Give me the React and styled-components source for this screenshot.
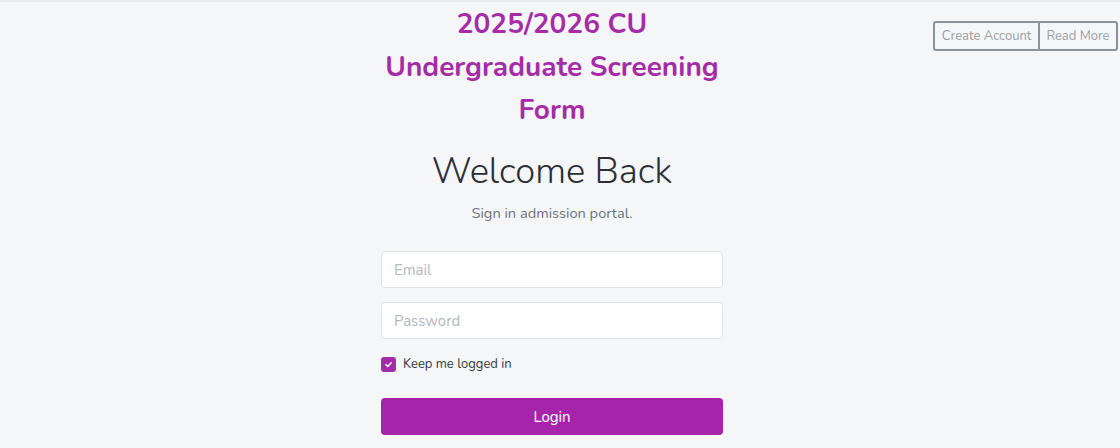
import React from 'react'
import styled, { createGlobalStyle } from 'styled-components'

const GlobalStyle = createGlobalStyle`
  html, body {
    margin: 0;
    padding: 0;
    background: #f5f6f8;
  }
  body {
    font-family: "Nunito", "Lato", "Noto Sans", sans-serif;
    color: #2b2f36;
  }
`

const Page = styled.div`
  min-height: 448px;
  box-sizing: border-box;
  border-top: 2px solid #ebebeb;
  display: grid;
  grid-template-columns: 381px 342px 1fr;
  align-items: start;
`

const Column = styled.main`
  grid-column: 2;
  display: flex;
  flex-direction: column;
  align-items: stretch;
`

const Title = styled.h1`
  margin: 0;
  padding-top: 1px;
  font-size: 28px;
  line-height: 43px;
  font-weight: 700;
  color: #a52ca6;
  text-align: center;
`

const Welcome = styled.h2`
  margin: 18px 0 0;
  font-size: 36.4px;
  line-height: 43px;
  font-weight: 300;
  color: #2b2f36;
  text-align: center;
`

const Lead = styled.p`
  margin: 9px 0 0;
  font-size: 14.6px;
  line-height: 22px;
  color: #6c727a;
  text-align: center;
`

const Form = styled.form`
  margin-top: 27px;
  display: flex;
  flex-direction: column;
  gap: 14px;
`

const Input = styled.input`
  box-sizing: border-box;
  width: 100%;
  height: 37px;
  padding: 0 12px;
  border: 1.5px solid #dfe2e6;
  border-radius: 4px;
  background: #fff;
  font-family: inherit;
  font-size: 15px;
  color: #2b2f36;
  outline: none;

  &::placeholder {
    color: #b3b8bd;
  }
`

const CheckRow = styled.label`
  display: flex;
  align-items: center;
  gap: 7px;
  margin-top: 1px;
  height: 20px;
  font-size: 13px;
  line-height: 20px;
  color: #343a40;
`

const Box = styled.span`
  width: 15px;
  height: 15px;
  border-radius: 3px;
  background: #a52ca6;
  display: inline-flex;
  align-items: center;
  justify-content: center;
`

const LoginButton = styled.button`
  margin-top: 10px;
  height: 37px;
  border: none;
  border-radius: 4px;
  background: #a624aa;
  color: #fff;
  font-family: inherit;
  font-size: 15px;
  cursor: pointer;
`

const Actions = styled.div`
  grid-column: 3;
  justify-self: end;
  margin: 19px 2px 0 0;
  display: flex;
`

const GhostButton = styled.button`
  height: 30px;
  padding: 0 6.5px;
  border: 2px solid #8d9499;
  background: transparent;
  color: #9aa0a6;
  font-family: inherit;
  font-size: 13px;
  border-radius: ${p => (p.$first ? '3px 0 0 3px' : '0 3px 3px 0')};
  margin-left: ${p => (p.$first ? '0' : '-2px')};
`

const App = () => {
  return (
    <>
      <GlobalStyle />
      <Page>
        <Column>
          <Title>2025/2026 CU Undergraduate Screening Form</Title>
          <Welcome>Welcome Back</Welcome>
          <Lead>Sign in admission portal.</Lead>
          <Form onSubmit={e => e.preventDefault()}>
            <Input type="email" placeholder="Email" />
            <Input type="password" placeholder="Password" />
            <CheckRow>
              <Box>
                <svg width="9" height="9" viewBox="0 0 12 12">
                  <path d="M2.5 6.2 5 8.6 9.6 3.6" fill="none" stroke="#fff" strokeWidth="2" strokeLinecap="round" strokeLinejoin="round" />
                </svg>
              </Box>
              Keep me logged in
            </CheckRow>
            <LoginButton type="submit">Login</LoginButton>
          </Form>
        </Column>
        <Actions>
          <GhostButton $first>Create Account</GhostButton>
          <GhostButton>Read More</GhostButton>
        </Actions>
      </Page>
    </>
  )
}

export default App
